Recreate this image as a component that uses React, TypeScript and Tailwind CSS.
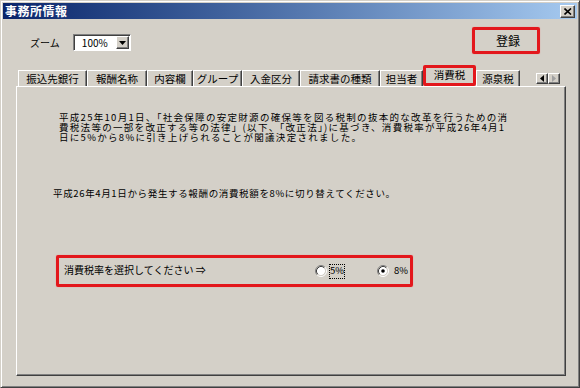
const FONT = "font-['Noto_Sans_CJK_JP','Noto_Sans',sans-serif]";

const TABS = [
  { label: "振込先銀行", w: "w-[69px]" },
  { label: "報酬名称", w: "w-[60px]" },
  { label: "内容欄", w: "w-[46px]" },
  { label: "グループ", w: "w-[49px]" },
  { label: "入金区分", w: "w-[58px]" },
  { label: "請求書の種類", w: "w-[80px]" },
  { label: "担当者", w: "w-[43px]" },
  { label: "消費税", w: "w-[53px]", active: true },
  { label: "源泉税", w: "w-[44px]" },
];

const NOTICE = [
  "平成25年10月1日、「社会保障の安定財源の確保等を図る税制の抜本的な改革を行うための消",
  "費税法等の一部を改正する等の法律」(以下、「改正法」)に基づき、消費税率が平成26年4月1",
  "日に5%から8%に引き上げられることが閣議決定されました。",
];

// classic raised 3d edge
const raised =
  "border border-t-white border-l-white border-r-[#404040] border-b-[#404040] shadow-[inset_-1px_-1px_#808080]";

function Radio({ checked }: { checked?: boolean }) {
  return (
    <svg width="12" height="12" viewBox="0 0 12 12" className="shrink-0">
      <circle cx="6" cy="6" r="4.2" fill="#fff" />
      <path d="M2.11 9.89 A5.5 5.5 0 0 1 9.89 2.11" fill="none" stroke="#808080" />
      <path d="M9.89 2.11 A5.5 5.5 0 0 1 2.11 9.89" fill="none" stroke="#fff" />
      <path d="M2.82 9.18 A4.5 4.5 0 0 1 9.18 2.82" fill="none" stroke="#404040" />
      <path d="M9.18 2.82 A4.5 4.5 0 0 1 2.82 9.18" fill="none" stroke="#d4d0c8" />
      {checked && <circle cx="6" cy="6" r="1.8" fill="#000" />}
    </svg>
  );
}

function ArrowBtn({ dir, dim }: { dir: "l" | "r"; dim?: boolean }) {
  return (
    <div className={`w-[12px] h-[11px] bg-[#d4d0c8] flex items-center justify-center ${raised}`}>
      <svg width="4" height="7" viewBox="0 0 4 7">
        <path d={dir === "l" ? "M4 0 L0 3.5 L4 7 Z" : "M0 0 L4 3.5 L0 7 Z"} fill={dim ? "#a0a0a0" : "#000"} />
      </svg>
    </div>
  );
}

export default function App() {
  return (
    <div
      className={`w-[580px] h-[388px] bg-[#d4d0c8] p-[2px] border border-t-[#d4d0c8] border-l-[#d4d0c8] border-r-[#404040] border-b-[#404040] shadow-[inset_1px_1px_#fff,inset_-1px_-1px_#808080] text-black ${FONT} flex flex-col overflow-hidden`}
    >
      {/* title bar */}
      <div className="h-[16px] bg-linear-to-r from-[#0a246a] to-[#a6caf0] flex items-center pl-[2px] pr-[2px] shrink-0">
        <span className="text-[12px] leading-none font-bold text-white tracking-[0.5px]">事務所情報</span>
        <div className={`ml-auto w-[15px] h-[13px] bg-[#d4d0c8] flex items-center justify-center ${raised}`}>
          <svg width="8" height="7" viewBox="0 0 8 7">
            <path d="M0.5 0.5 L7 6.5 M7 0.5 L0.5 6.5" stroke="#000" strokeWidth="1.6" />
          </svg>
        </div>
      </div>

      {/* zoom + register */}
      <div className="flex items-start shrink-0">
        <div className="flex items-center mt-[15px] pl-[27px]">
          <span className="text-[10px] leading-none">ズーム</span>
          <div className="ml-[13px] w-[58px] h-[17px] bg-white flex items-center border border-t-[#808080] border-l-[#808080] border-r-white border-b-white shadow-[inset_1px_1px_#404040]">
            <span className="flex-1 text-right pr-[8px] text-[10px] leading-none">100%</span>
            <div className={`w-[13px] h-[13px] mr-[1px] bg-[#d4d0c8] flex items-center justify-center ${raised}`}>
              <svg width="7" height="4" viewBox="0 0 7 4">
                <path d="M0 0 L7 0 L3.5 4 Z" fill="#000" />
              </svg>
            </div>
          </div>
        </div>
        <div className="ml-auto mr-[37px] mt-[8px] w-[68px] h-[27px] border-[3px] border-[#e3171c] rounded-[2px] flex items-center justify-center shadow-[0_0_1px_#f07070]">
          <span className="text-[12px] leading-none pl-[4px]">登録</span>
        </div>
      </div>

      {/* tabs */}
      <div className="flex items-end ml-[15px] mt-[11px] h-[21px] shrink-0 relative z-10">
        {TABS.map((t) =>
          t.active ? (
            <div
              key={t.label}
              className={`${t.w} h-[21px] bg-[#d4d0c8] border-[3px] border-[#e3171c] rounded-[2px] flex justify-center pt-[1px] text-[10.5px] leading-[12px]`}
            >
              {t.label}
            </div>
          ) : (
            <div
              key={t.label}
              className={`${t.w} h-[16px] border-t border-l border-t-white border-l-white border-r border-r-[#404040] shadow-[inset_-1px_0_#808080] flex justify-center pt-[2px] text-[10.5px] leading-[12px]`}
            >
              {t.label}
            </div>
          )
        )}
        <div className="flex ml-[16px] mb-[2px]">
          <ArrowBtn dir="l" />
          <ArrowBtn dir="r" dim />
        </div>
      </div>

      {/* panel */}
      <div className="ml-[13px] w-[550px] h-[290px] border border-t-white border-l-white border-r-[#404040] border-b-[#404040] shadow-[inset_-1px_-1px_#808080] flex flex-col text-[9.5px] leading-[10px] shrink-0">
        <div className="ml-[42px] mt-[25px] tracking-[1.3px] whitespace-nowrap flex flex-col">
          {NOTICE.map((line) => (
            <div key={line} className="h-[10px] flex items-center">
              {line}
            </div>
          ))}
        </div>
        <div className="ml-[36px] mt-[46px] h-[10px] flex items-center tracking-[0.65px] whitespace-nowrap">
          平成26年4月1日から発生する報酬の消費税額を8%に切り替えてください。
        </div>
        <div className="ml-[39px] mt-[57px] w-[357px] h-[32px] border-[3px] border-[#e3171c] rounded-[2px] flex items-center shadow-[0_0_1px_#f07070] text-[10px]">
          <span className="w-[256px] pl-[5px] pb-[3px] leading-none whitespace-nowrap">消費税率を選択してください ⇒</span>
          <Radio />
          <span className="ml-[2px] w-[16px] h-[15px] border border-dotted border-black flex items-center justify-center leading-none text-[9.5px]">
            5%
          </span>
          <span className="ml-[32px]">
            <Radio checked />
          </span>
          <span className="ml-[5px] leading-none text-[9.5px]">8%</span>
        </div>
      </div>
    </div>
  );
}
